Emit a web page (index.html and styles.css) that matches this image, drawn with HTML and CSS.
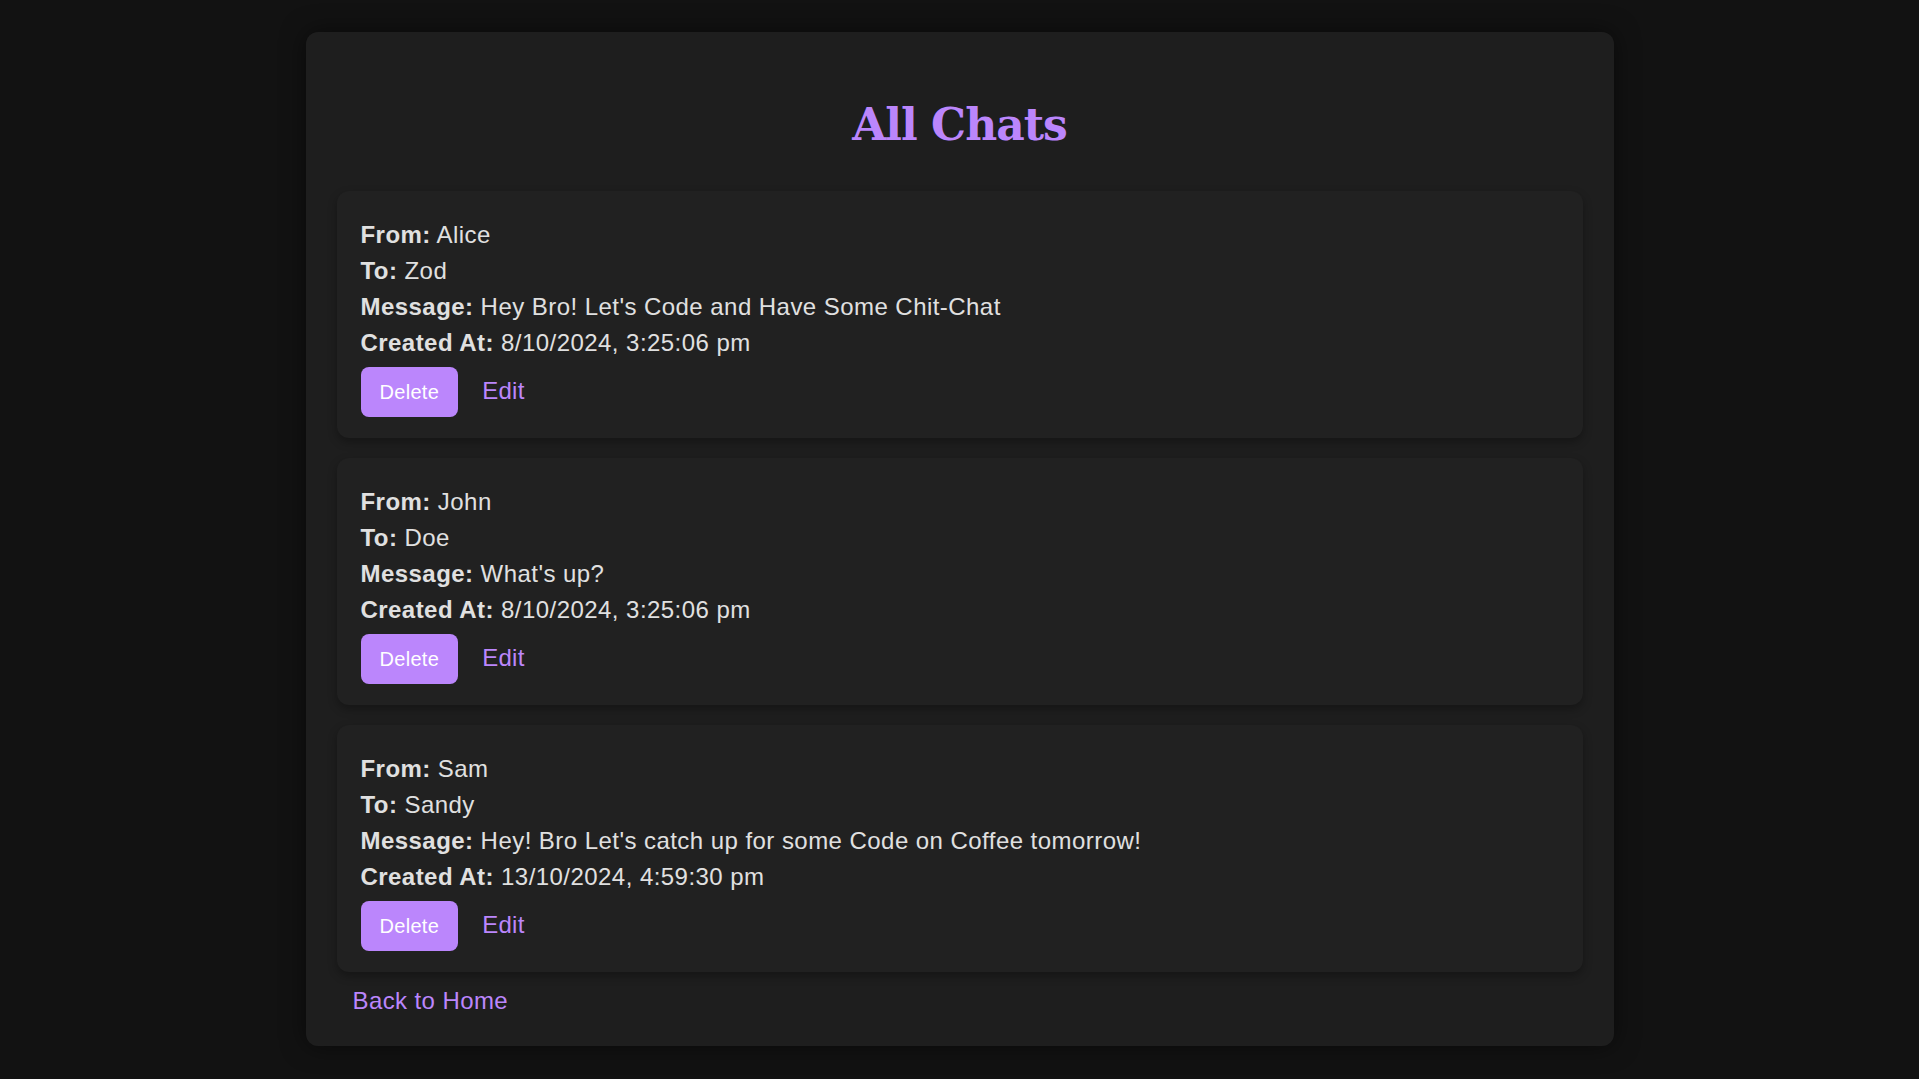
FILE: index.html
```html
<!DOCTYPE html>
<html lang="en">
<head>
<meta charset="utf-8">
<title>All Chats</title>
<link rel="stylesheet" href="styles.css">
</head>
<body>
<main class="container">
  <h1 class="title">All Chats</h1>
  <div class="chat">
    <p class="line"><strong>From:</strong> Alice</p>
    <p class="line"><strong>To:</strong> Zod</p>
    <p class="line"><strong>Message:</strong> Hey Bro! Let's Code and Have Some Chit-Chat</p>
    <p class="line"><strong>Created At:</strong> 8/10/2024, 3:25:06 pm</p>
    <div class="actions"><button class="btn-delete">Delete</button><a class="edit" href="#">Edit</a></div>
  </div>
  <div class="chat">
    <p class="line"><strong>From:</strong> John</p>
    <p class="line"><strong>To:</strong> Doe</p>
    <p class="line"><strong>Message:</strong> What's up?</p>
    <p class="line"><strong>Created At:</strong> 8/10/2024, 3:25:06 pm</p>
    <div class="actions"><button class="btn-delete">Delete</button><a class="edit" href="#">Edit</a></div>
  </div>
  <div class="chat">
    <p class="line"><strong>From:</strong> Sam</p>
    <p class="line"><strong>To:</strong> Sandy</p>
    <p class="line"><strong>Message:</strong> Hey! Bro Let's catch up for some Code on Coffee tomorrow!</p>
    <p class="line"><strong>Created At:</strong> 13/10/2024, 4:59:30 pm</p>
    <div class="actions"><button class="btn-delete">Delete</button><a class="edit" href="#">Edit</a></div>
  </div>
  <a class="back" href="#">Back to Home</a>
</main>
</body>
</html>
```
FILE: styles.css
```css
html, body {
  margin: 0;
  background: #121212;
}
body {
  padding: 32px 0 33px;
  font-family: "Liberation Sans", Arial, sans-serif;
  color: #e0e0e0;
}
.container {
  box-sizing: border-box;
  width: 1308px;
  margin: 0 auto;
  padding: 32px 31px 31px;
  background: #1e1e1e;
  border-radius: 12px;
  box-shadow: 0 0 24px rgba(0, 0, 0, 0.5);
  display: flex;
  flex-direction: column;
}
.title {
  margin: 35px 0 40px;
  font-family: "DejaVu Serif", "Liberation Serif", serif;
  font-weight: bold;
  font-size: 44px;
  line-height: 52px;
  letter-spacing: -1px;
  text-align: center;
  color: #bb86fc;
}
.chat {
  background: #212121;
  border-radius: 12px;
  padding: 26px 24px 21px;
  margin-bottom: 20px;
  box-shadow: 0 4px 10px rgba(0, 0, 0, 0.3);
}
.chat:last-of-type {
  margin-bottom: 0;
}
.line {
  margin: 0;
  font-size: 24px;
  line-height: 36px;
  letter-spacing: 0.45px;
}
.line strong {
  font-weight: bold;
}
.actions {
  margin-top: 6px;
  display: flex;
  align-items: baseline;
  gap: 24px;
}
.btn-delete {
  font-family: "Liberation Sans", Arial, sans-serif;
  font-size: 20px;
  line-height: 24px;
  padding: 13px 19px;
  letter-spacing: 0.3px;
  border: none;
  border-radius: 8px;
  background: #bb86fc;
  color: #ffffff;
  cursor: pointer;
}
.edit {
  font-size: 24px;
  letter-spacing: 0.3px;
  color: #bb86fc;
  text-decoration: none;
}
.back {
  align-self: flex-start;
  margin: 15px 0 0 16px;
  font-size: 24px;
  line-height: 28px;
  letter-spacing: 0.4px;
  color: #bb86fc;
  text-decoration: none;
}
```
